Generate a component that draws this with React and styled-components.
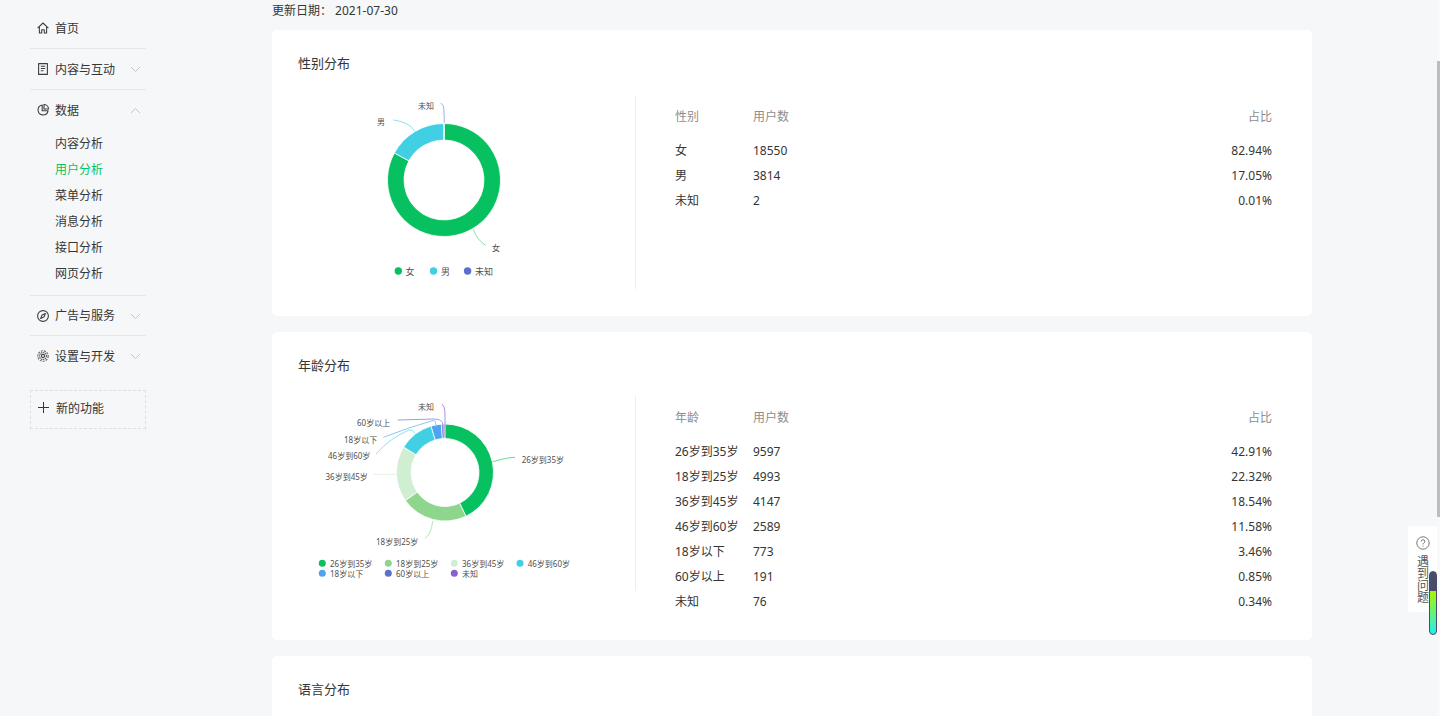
import React from "react";
import styled, { createGlobalStyle } from "styled-components";

const GlobalStyle = createGlobalStyle`
  html, body { margin: 0; padding: 0; height: 716px; overflow: hidden; background: #f6f7f9; }
  body { font-family: "Noto Sans", "Noto Sans CJK SC", "Liberation Sans", sans-serif; font-size: 12px; color: #353535; }
  svg text { font-family: "Noto Sans", "Noto Sans CJK SC", sans-serif; }
`;

const Page = styled.div`
  display: flex;
  align-items: flex-start;
  width: 1440px;
  height: 716px;
  overflow: hidden;
  position: relative;
`;
const Sidebar = styled.nav`
  width: 116px;
  margin: 8px 126px 0 30px;
  flex: none;
`;
const Group = styled.div`
  border-bottom: ${p => (p.$last ? "none" : "1px solid #e4e6ea")};
  padding-bottom: ${p => (p.$open ? "9px" : "0")};
`;
const Row = styled.div`
  height: ${p => p.$h || 40}px;
  display: flex;
  align-items: center;
  padding-left: 7px;
  color: #353535;
`;
const IconSlot = styled.span`
  width: 11px;
  height: 12px;
  margin-right: 7px;
  display: flex;
  align-items: center;
  justify-content: center;
  color: #3f3f3f;
  flex: none;
`;
const Label = styled.span`
  flex: 1;
  line-height: 20px;
  margin-top: 1px;
`;
const Arrow = styled.span`
  width: 11px;
  margin: 1px 5px 0 0;
  display: flex;
  color: #c4c6ca;
`;
const SubItem = styled.div`
  height: 26px;
  line-height: 27px;
  padding-left: 25px;
  color: ${p => (p.$active ? "#07c160" : "#353535")};
`;
const AddBox = styled.div`
  margin-top: 14px;
  border: 1px dashed #dcdee2;
  display: flex;
  align-items: center;
  padding: 0 0 4px 7px;
  height: 33px;
  gap: 7px;
  color: #353535;
`;
const Main = styled.main`
  width: 1040px;
  flex: none;
`;
const DateLine = styled.div`
  height: 30px;
  line-height: 21px;
  color: #353535;
  white-space: pre;
`;
const Card = styled.section`
  background: #fff;
  border-radius: 5px;
  padding: 0 26px;
  margin-bottom: 16px;
  height: ${p => p.$h}px;
`;
const CardTitle = styled.h2`
  margin: 0;
  font-size: 13px;
  font-weight: 400;
  height: ${p => p.$h}px;
  padding-top: 24px;
  line-height: 18px;
  box-sizing: border-box;
  color: #353535;
`;
const CardBody = styled.div`
  display: flex;
`;
const ChartPane = styled.div`
  width: 337px;
  height: ${p => p.$h}px;
  border-right: 1px solid #eceef0;
  flex: none;
  svg { display: block; }
`;
const TablePane = styled.div`
  width: 597px;
  margin-left: 39px;
  padding-top: ${p => p.$top}px;
`;
const Tr = styled.div`
  display: grid;
  grid-template-columns: 78px 1fr auto;
  height: 25px;
  line-height: 25px;
  margin-bottom: ${p => (p.$head ? "9px" : "0")};
  color: ${p => (p.$head ? "#8d8d8d" : "#353535")};
`;
const HelpBox = styled.div`
  position: absolute;
  left: 1408px;
  top: 526px;
  width: 32px;
  height: 86px;
  background: #fff;
  border-radius: 3px 0 0 3px;
  box-sizing: border-box;
  padding: 10px 0 0 9px;
  color: #555;
`;
const HelpText = styled.div`
  width: 12px;
  margin-top: 6px;
  line-height: 12px;
  word-break: break-all;
`;
const Meter = styled.div`
  position: absolute;
  left: 1429px;
  top: 571px;
  width: 8px;
  height: 64px;
  box-sizing: border-box;
  border: 1px solid #4a4a6a;
  border-radius: 4px;
  background: linear-gradient(#4a4a6a 0 19px, #a8f500 19px, #20f0f0 100%);
`;
const ScrollTrack = styled.div`
  position: absolute;
  left: 1437px;
  top: 0;
  width: 3px;
  height: 716px;
  background: #f9f9fa;
`;
const ScrollThumb = styled.div`
  position: absolute;
  left: 1437px;
  top: 61px;
  width: 3px;
  height: 456px;
  background: #bdbdbd;
`;

const ChartLabel = styled.text`
  font-size: ${p => p.$s || 8}px;
  fill: #4f4f4f;
  dominant-baseline: central;
`;

function polar(cx, cy, r, a) {
  const t = ((a - 90) * Math.PI) / 180;
  return [cx + r * Math.cos(t), cy + r * Math.sin(t)];
}
function arcPath(cx, cy, R, r, a0, a1) {
  const [x0, y0] = polar(cx, cy, R, a0);
  const [x1, y1] = polar(cx, cy, R, a1);
  const [x2, y2] = polar(cx, cy, r, a1);
  const [x3, y3] = polar(cx, cy, r, a0);
  const large = a1 - a0 > 180 ? 1 : 0;
  return `M${x0} ${y0}A${R} ${R} 0 ${large} 1 ${x1} ${y1}L${x2} ${y2}A${r} ${r} 0 ${large} 0 ${x3} ${y3}Z`;
}
function Donut({ cx, cy, R, r, data }) {
  let acc = 0;
  const total = data.reduce((s, d) => s + d.v, 0);
  return data.map(d => {
    const a0 = acc;
    acc += (d.v / total) * 360;
    return <path key={d.name} d={arcPath(cx, cy, R, r, a0, acc)} fill={d.c} stroke="#fff" strokeWidth="0.8" />;
  });
}

const GREEN = "#07c160", CYAN = "#40cfe3", INDIGO = "#5b6fd0";
const gender = [
  { name: "女", v: 82.94, c: GREEN },
  { name: "男", v: 17.05, c: CYAN },
  { name: "未知", v: 0.01, c: INDIGO },
];
const age = [
  { name: "26岁到35岁", v: 42.91, c: GREEN, n: 9597, p: "42.91%" },
  { name: "18岁到25岁", v: 22.32, c: "#8fd68d", n: 4993, p: "22.32%" },
  { name: "36岁到45岁", v: 18.54, c: "#d0efd2", n: 4147, p: "18.54%" },
  { name: "46岁到60岁", v: 11.58, c: CYAN, n: 2589, p: "11.58%" },
  { name: "18岁以下", v: 3.46, c: "#4ea5ef", n: 773, p: "3.46%" },
  { name: "60岁以上", v: 0.85, c: INDIGO, n: 191, p: "0.85%" },
  { name: "未知", v: 0.34, c: "#8a5fd0", n: 76, p: "0.34%" },
];

function GenderChart() {
  return (
    <svg width="337" height="193" viewBox="298 96 337 193">
      <Donut cx={444} cy={180} R={56.5} r={40} data={gender} />
      <g fill="none" strokeWidth="1">
        <path d="M473.3 229.3Q477 240 485.7 245.3" stroke="#83dcae" />
        <path d="M415 131.7Q410 122 393.3 120" stroke="#8ce2ee" />
        <path d="M444.3 122.7L444 112Q444 104 440.7 103.3" stroke="#a5b0e5" />
      </g>
      <ChartLabel x="492" y="247">女</ChartLabel>
      <ChartLabel x="377" y="121.5">男</ChartLabel>
      <ChartLabel x="418" y="105">未知</ChartLabel>
      <circle cx="398.3" cy="271" r="3.7" fill={GREEN} />
      <ChartLabel $s={9} x="405.5" y="271">女</ChartLabel>
      <circle cx="433.5" cy="271" r="3.7" fill={CYAN} />
      <ChartLabel $s={9} x="441" y="271">男</ChartLabel>
      <circle cx="467.6" cy="271" r="3.7" fill={INDIGO} />
      <ChartLabel $s={9} x="475" y="271">未知</ChartLabel>
    </svg>
  );
}

const ageLabels = [
  ["26岁到35岁", 521.7, 459.3],
  ["18岁到25岁", 376, 541],
  ["36岁到45岁", 325.5, 476],
  ["46岁到60岁", 328, 455],
  ["18岁以下", 344, 439],
  ["60岁以上", 357, 422],
  ["未知", 418, 406],
];
const legendX = [322.3, 388.3, 454.3, 520];

function AgeChart() {
  return (
    <svg width="337" height="195" viewBox="298 396 337 195">
      <Donut cx={445} cy={472.5} R={48.5} r={34} data={age} />
      <g fill="none" strokeWidth="1">
        <path d="M492.7 461.7L503 459Q509 457.5 515 457.3" stroke="#6ad9a0" />
        <path d="M432.7 521Q431 535 425 538.3" stroke="#b8e6b6" />
        <path d="M397 474.3H374" stroke="#e2f5e3" />
        <path d="M415 433.3Q413 429 409 430Q390 438 376 454" stroke="#8ce2ee" />
        <path d="M383.3 437.3Q410 427 433 420.5Q436 420 436 427" stroke="#8fc7f4" />
        <path d="M397.7 420L434 419Q443 419 443 425V437" stroke="#98a4e2" />
        <path d="M441.7 404Q445 406 445 414V437" stroke="#ac8ee0" />
      </g>
      {ageLabels.map(([t, x, y]) => (
        <ChartLabel key={t} x={x} y={y}>{t}</ChartLabel>
      ))}
      {age.map((d, i) => {
        const x = legendX[i % 4];
        const y = i < 4 ? 563.3 : 573.3;
        return (
          <g key={d.name}>
            <circle cx={x} cy={y} r="3.5" fill={d.c} />
            <ChartLabel x={x + 7.7} y={y}>{d.name}</ChartLabel>
          </g>
        );
      })}
    </svg>
  );
}

const Icon = ({ children }) => (
  <svg width="12" height="12" viewBox="0 0 12 12" fill="none" stroke="currentColor" strokeWidth="1.1" strokeLinejoin="round" style={{ flex: "none" }}>
    {children}
  </svg>
);
const HomeIcon = () => <Icon><path d="M.6 6.2L6 1L11.4 6.2M2.4 5V11H4.7V7.8H7.3V11H9.6V5" /></Icon>;
const DocIcon = () => <Icon><path d="M1.6 .6H10.4V11.4H1.6ZM3.8 3.3H8.2M3.8 5.5H8.2M3.8 7.7H6.5" /></Icon>;
const PieIcon = () => <Icon><path d="M5.2 1A5 5 0 1 0 11 6.8H5.2ZM7 .5A4.6 4.6 0 0 1 11.5 5H7Z" /></Icon>;
const CompassIcon = () => <Icon><circle cx="6" cy="6" r="5.4" /><path d="M8.4 3.6L6.9 6.9L3.6 8.4L5.1 5.1Z" /></Icon>;
const GearIcon = () => (
  <Icon>
    <circle cx="6" cy="6" r="1.6" />
    <circle cx="6" cy="6" r="3.5" strokeDasharray="1.4 .6" strokeWidth="1.2" opacity=".8" />
    <circle cx="6" cy="6" r="5.2" strokeDasharray="2 1.1" strokeWidth="1.1" opacity=".8" />
  </Icon>
);
const Chevron = ({ up }) => (
  <svg width="11" height="7" viewBox="0 0 11 7" fill="none" stroke="currentColor" strokeWidth="1">
    <path d={up ? "M1 6L5.5 1.5L10 6" : "M1 1L5.5 5.5L10 1"} />
  </svg>
);
const PlusIcon = () => (
  <svg width="11" height="11" viewBox="0 0 11 11" stroke="#353535" strokeWidth="1"><path d="M5.5 0V11M0 5.5H11" /></svg>
);
const HelpGlyph = styled.svg`
  display: block;
  margin-left: -1px;
`;
const HelpIcon = () => (
  <HelpGlyph width="14" height="14" viewBox="0 0 14 14" fill="none" stroke="#777" strokeWidth="1">
    <circle cx="7" cy="7" r="6.2" />
    <path d="M5.2 5.5A1.8 1.8 0 1 1 7.6 7.2Q7 7.5 7 8.4M7 9.6V10.6" />
  </HelpGlyph>
);

const subItems = ["内容分析", "用户分析", "菜单分析", "消息分析", "接口分析", "网页分析"];

function DataTable({ head, rows, top }) {
  return (
    <TablePane $top={top}>
      <Tr $head>
        <span>{head}</span>
        <span>用户数</span>
        <span>占比</span>
      </Tr>
      {rows.map(r => (
        <Tr key={r[0]}>
          <span>{r[0]}</span>
          <span>{r[1]}</span>
          <span>{r[2]}</span>
        </Tr>
      ))}
    </TablePane>
  );
}

export default function App() {
  return (
    <Page>
      <GlobalStyle />
      <Sidebar>
        <Group>
          <Row><IconSlot><HomeIcon /></IconSlot><Label>首页</Label></Row>
        </Group>
        <Group>
          <Row><IconSlot><DocIcon /></IconSlot><Label>内容与互动</Label><Arrow><Chevron /></Arrow></Row>
        </Group>
        <Group $open>
          <Row><IconSlot><PieIcon /></IconSlot><Label>数据</Label><Arrow><Chevron up /></Arrow></Row>
          {subItems.map((s, i) => <SubItem key={s} $active={i === 1}>{s}</SubItem>)}
        </Group>
        <Group>
          <Row $h={39}><IconSlot><CompassIcon /></IconSlot><Label>广告与服务</Label><Arrow><Chevron /></Arrow></Row>
        </Group>
        <Group $last>
          <Row><IconSlot><GearIcon /></IconSlot><Label>设置与开发</Label><Arrow><Chevron /></Arrow></Row>
        </Group>
        <AddBox><PlusIcon /><span>新的功能</span></AddBox>
      </Sidebar>
      <Main>
        <DateLine>更新日期： 2021-07-30</DateLine>
        <Card $h={286}>
          <CardTitle $h={66}>性别分布</CardTitle>
          <CardBody>
            <ChartPane $h={193}><GenderChart /></ChartPane>
            <DataTable
              head="性别"
              top={8}
              rows={[["女", "18550", "82.94%"], ["男", "3814", "17.05%"], ["未知", "2", "0.01%"]]}
            />
          </CardBody>
        </Card>
        <Card $h={308}>
          <CardTitle $h={64}>年龄分布</CardTitle>
          <CardBody>
            <ChartPane $h={195}><AgeChart /></ChartPane>
            <DataTable head="年龄" top={9} rows={age.map(a => [a.name, a.n, a.p])} />
          </CardBody>
        </Card>
        <Card $h={120}>
          <CardTitle $h={66}>语言分布</CardTitle>
        </Card>
      </Main>
      <HelpBox>
        <HelpIcon />
        <HelpText>遇到问题</HelpText>
      </HelpBox>
      <Meter />
      <ScrollTrack />
      <ScrollThumb />
    </Page>
  );
}
